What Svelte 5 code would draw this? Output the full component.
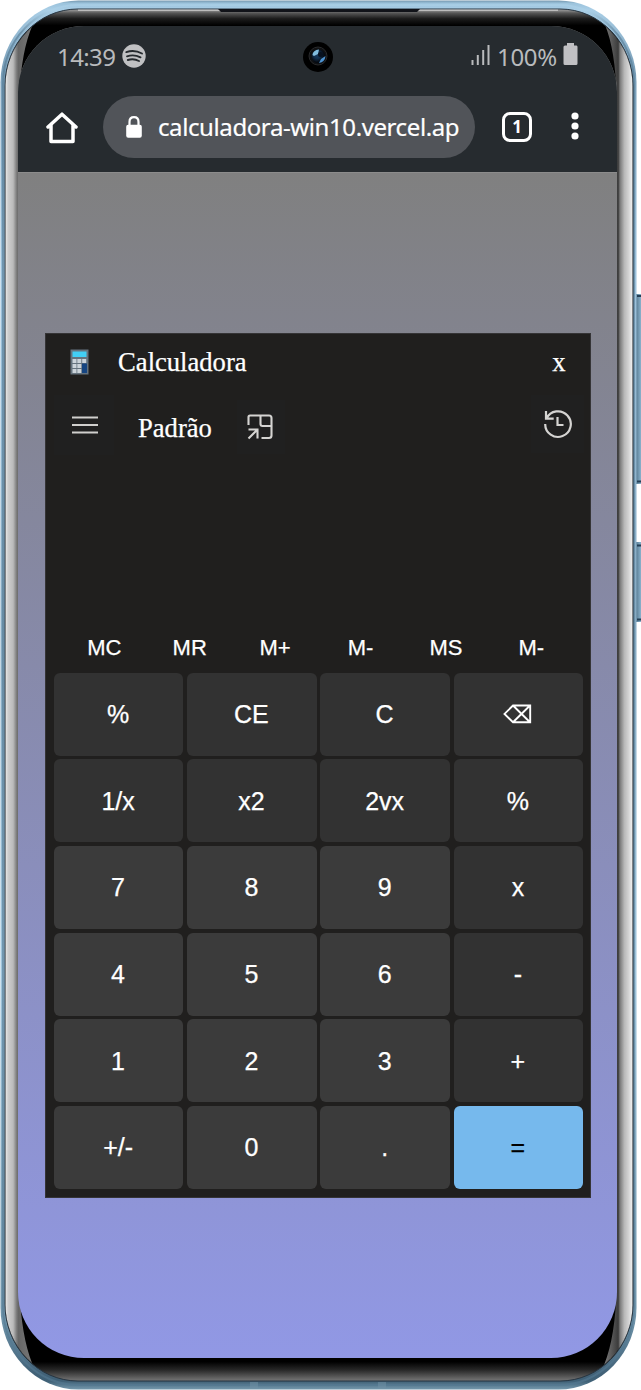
<script>
  const memory = ['MC', 'MR', 'M+', 'M-', 'MS', 'M-'];
  const keys = [
    '%', 'CE', 'C', '⌫',
    '1/x', 'x2', '2vx', '%',
    '7', '8', '9', 'x',
    '4', '5', '6', '-',
    '1', '2', '3', '+',
    '+/-', '0', '.', '='
  ];
  const isDigitArea = (i) => i >= 8 && i % 4 !== 3;
</script>

<div class="phone">
  <svg class="frame" width="641" height="1390" viewBox="0 0 641 1390" aria-hidden="true">
    <defs>
      <linearGradient id="body" x1="0" y1="0" x2="0" y2="1">
        <stop offset="0" stop-color="#7396ad" />
        <stop offset=".002" stop-color="#9cc3dc" />
        <stop offset=".0065" stop-color="#a9cee6" />
        <stop offset=".05" stop-color="#789db7" />
        <stop offset=".2" stop-color="#9dc2dc" />
        <stop offset=".45" stop-color="#86aac2" />
        <stop offset=".7" stop-color="#a0c5dc" />
        <stop offset=".95" stop-color="#6f94aa" />
        <stop offset=".988" stop-color="#426278" />
        <stop offset=".994" stop-color="#3f6076" />
        <stop offset="1" stop-color="#7599ad" />
      </linearGradient>
      <linearGradient id="glass" x1="0" y1="9" x2="0" y2="1381" gradientUnits="userSpaceOnUse">
        <stop offset="0" stop-color="#aaa" />
        <stop offset=".003" stop-color="#555" />
        <stop offset=".007" stop-color="#1c1c1c" />
        <stop offset=".012" stop-color="#000" />
        <stop offset=".986" stop-color="#000" />
        <stop offset=".992" stop-color="#282828" />
        <stop offset="1" stop-color="#777" />
      </linearGradient>
      <linearGradient id="left" x1="5" y1="0" x2="32" y2="0" gradientUnits="userSpaceOnUse">
        <stop offset="0" stop-color="#eee" />
        <stop offset=".12" stop-color="#cdcdcd" />
        <stop offset=".3" stop-color="#bbb" />
        <stop offset=".44" stop-color="#777" />
        <stop offset=".5" stop-color="#666" />
        <stop offset="1" stop-color="#777" />
      </linearGradient>
      <linearGradient id="right" x1="632" y1="0" x2="605" y2="0" gradientUnits="userSpaceOnUse">
        <stop offset="0" stop-color="#eee" />
        <stop offset=".12" stop-color="#d4d4d4" />
        <stop offset=".28" stop-color="#b8b8b8" />
        <stop offset=".45" stop-color="#777" />
        <stop offset=".51" stop-color="#3b3b3b" />
        <stop offset="1" stop-color="#777" />
      </linearGradient>
      <linearGradient id="button" x1="0" x2="1" y1="0" y2="0">
        <stop offset="0" stop-color="#587b91" />
        <stop offset=".6" stop-color="#88b0ca" />
        <stop offset="1" stop-color="#a5cbe2" />
      </linearGradient>
      <linearGradient id="rim" x1="0" x2="0" y1="0" y2="1">
        <stop offset="0" stop-color="#acd1e8" />
        <stop offset=".004" stop-color="#acd1e8" />
        <stop offset=".02" stop-color="#537891" />
        <stop offset="1" stop-color="#537891" />
      </linearGradient>
      <clipPath id="shape"><rect x="5.5" y="9.5" width="627" height="1371" rx="73" ry="76" /></clipPath>
      <radialGradient id="lens" cx=".4" cy=".4">
        <stop offset="0" stop-color="#173c60" />
        <stop offset=".5" stop-color="#112d4b" />
        <stop offset="1" stop-color="#060a11" />
      </radialGradient>
    </defs>
    <g fill="url(#button)">
      <rect x="636" y="294" width="8" height="190" />
      <rect x="636" y="542" width="8" height="80" />
    </g>
    <path d="M637 296h4M637 481.500h4M637 545.500h4M637 619.500h4" stroke="#243f55" stroke-width="2" />
    <rect x=".5" y=".5" width="636" height="1389" rx="78" ry="82" fill="url(#body)" />
    <rect x="3" y="5" width="631" height="1380" rx="75" ry="79" fill="none" stroke="url(#rim)" stroke-opacity=".6" stroke-width="2" />
    <rect x="5" y="9" width="628" height="1372" rx="73" ry="77" fill="url(#glass)" stroke="#263440" />
    <g clip-path="url(#shape)">
      <path d="M0 0 36 18Q23 42 20 85V1300Q23 1345 35 1370L0 1390Z" fill="url(#left)" />
      <path d="M641 0 602 18Q614 42 616 85V1300Q614 1345 601 1372L641 1390Z" fill="url(#right)" />
      <path d="M78 10H558" stroke="#ccc" stroke-width="1.500" />
    </g>
    <path d="M218 9h202l-3 3H221z" fill="#111319" />
    <path d="M254 1382v7M382 1382v7" stroke="#7192a6" stroke-width="8" opacity=".5" />
  </svg>

  <main class="screen">
    <header>
      <div class="status">
        <span class="time">14:39</span>
        <svg class="spotify" width="24" height="24" viewBox="0 0 24 24">
          <circle cx="12" cy="12" r="11.700" fill="#c0c1c3" />
          <path d="M4.300 8.100Q12.500 5.500 20 9.500M5 12.300Q12 10 18.500 13.300M5.800 16Q11.800 14.200 17 17" fill="none" stroke="#262b2f" stroke-width="1.900" stroke-linecap="round" />
        </svg>
        <svg class="camera" width="30" height="30" viewBox="0 0 30 30">
          <circle cx="15" cy="15" r="15" fill="#000" />
          <circle cx="15" cy="14" r="9" fill="#101113" stroke="#292a2c" />
          <circle cx="15.500" cy="14.500" r="7" fill="url(#lens)" />
          <path d="M9.500 13Q10 8 16 7.500L15 12 11 14Z" fill="#82bddf" />
          <path d="M16 21Q22 20 22.500 14L18 17Z" fill="#4d92d0" />
          <circle cx="17.500" cy="12.500" r="2.500" fill="#08111f" />
        </svg>
        <svg class="signal" width="19" height="22" viewBox="0 0 19 22">
          <path d="M1.500 16v5M6.800 11v10M12.200 6v15M17.500 1v20" stroke="#b9bbbd" stroke-width="2" />
        </svg>
        <span class="percent">100%</span>
        <svg class="battery" width="15" height="22" viewBox="0 0 15 22">
          <path d="M4 0h7v2.500h2.500Q14.500 2.500 14.500 4v16.500q0 1.500-1.500 1.500H2Q.5 22 .5 20.500V4q0-1.500 1.500-1.500h2z" fill="#c0c0c3" />
        </svg>
      </div>
      <div class="browser">
        <svg class="home" width="32" height="32" viewBox="0 0 32 32">
          <path d="M2 15 16 2.200 30 15M5 13V29.500H27V13" fill="none" stroke="#fff" stroke-width="3.500" stroke-linejoin="round" stroke-linecap="round" />
        </svg>
        <div class="address">
          <svg width="16" height="22" viewBox="0 0 16 22">
            <path d="M3.500 10V6Q3.500 1.200 8 1.200T12.500 6v4" fill="none" stroke="#fff" stroke-width="2.200" />
            <rect x=".2" y="8.800" width="15.600" height="13" rx="2" fill="#fff" />
          </svg>
          <span>calculadora-win10.vercel.ap</span>
        </div>
        <div class="tabs">1</div>
        <svg class="dots" width="8" height="28" viewBox="0 0 8 28" fill="#fff">
          <circle cx="4" cy="4" r="3.600" /><circle cx="4" cy="14" r="3.600" /><circle cx="4" cy="24" r="3.600" />
        </svg>
      </div>
    </header>

    <section class="calculator">
      <div class="title">
        <svg width="19" height="26" viewBox="0 0 19 26">
          <rect x=".5" y=".5" width="18" height="25" fill="#65737e" />
          <rect x="2.500" y="2.500" width="14" height="5.500" fill="#42cff5" />
          <path d="M2.500 10h4v4h-4zM7.300 10h4v4h-4zM12.200 10h4v4h-4zM2.500 15h4v4h-4zM7.300 15h4v4h-4zM2.500 20h4v4h-4zM7.300 20h4v4h-4z" fill="#cbd3da" />
          <path d="M12 14.500h5V24h-5z" fill="#164581" />
        </svg>
        <span>Calculadora</span>
        <span class="close">x</span>
      </div>
      <div class="mode">
        <button class="menu" aria-label="Menu">
          <svg width="28" height="20" viewBox="0 0 28 20"><path d="M1 2.500h26M1 10h26M1 17.500h26" stroke="#d0cfcd" stroke-width="1.900" /></svg>
        </button>
        <span>Padrão</span>
        <button class="pin" aria-label="Compact">
          <svg width="26" height="26" viewBox="0 0 26 26"><path d="M1.500 11V3Q1.500 1.500 3 1.500H22Q24.500 1.500 24.500 4V21.500Q24.500 24 22 24H14.500M13.500 2V10Q13.500 12 15.500 12H24M1.500 24.500 10.500 15.500M1.500 15.500H10.500V24.500" fill="none" stroke="#d5d4d2" stroke-width="2.100" /></svg>
        </button>
        <button class="history" aria-label="History">
          <svg width="30" height="30" viewBox="0 0 30 30"><path d="M3.500 9.500A12.800 12.800 0 1 1 2.200 15M3 2V9.700H10.700M14.500 8V16H20.500" fill="none" stroke="#d5d4d2" stroke-width="2.200" /></svg>
        </button>
      </div>
      <div class="display"></div>
      <div class="memory">
        {#each memory as label}<button>{label}</button>{/each}
      </div>
      <div class="keys">
        {#each keys as key, i}
          <button class:digit={isDigitArea(i)} class:equals={key === '='} aria-label={key}>
            {#if key === '⌫'}
              <svg width="29" height="20" viewBox="0 0 29 20"><path d="M10 1.500H27.200V18.300H10L1.500 9.900ZM10 1.500 27 18.300M27 1.500 10 18.300" fill="none" stroke="#fff" stroke-width="1.900" /></svg>
            {:else}{key}{/if}
          </button>
        {/each}
      </div>
    </section>
  </main>
</div>

<style>
  :global(body) { margin: 0; background: #fff; }
  * { box-sizing: border-box; }
  svg { display: block; flex: none; }
  button { border: 0; padding: 0; margin: 0; color: #fff; font: inherit; }
  .phone { position: relative; width: 641px; height: 1390px; overflow: hidden; padding: 26px 0 0 18px; }
  .frame { position: absolute; inset: 0; }
  .screen { position: relative; width: 599px; height: 1332px; border-radius: 66px; overflow: hidden; background: linear-gradient(#808080 11%, #9198e5); }
  header { height: 146px; background: #262b2f; box-shadow: 0 1px #8c8c8c; color: #fff; font-family: "Noto Sans", sans-serif; }
  .status { height: 62px; display: flex; align-items: center; padding-left: 39px; color: #b9bbbd; font-size: 24px; white-space: nowrap; }
  .time { width: 65px; margin-top: -2px; letter-spacing: -.6px; }
  .spotify { margin-top: -2px; }
  .camera { margin-left: 157px; }
  .signal { margin: -5px 0 0 138px; }
  .percent { width: 66px; margin: -2px 0 0 7px; letter-spacing: -.3px; }
  .battery { margin-top: -6px; }
  .browser { height: 84px; display: flex; align-items: flex-start; padding: 8px 0 0 28px; }
  .home { margin-top: 16px; }
  .address { width: 372px; height: 62px; margin-left: 25px; border-radius: 31px; background: #515459; display: flex; align-items: center; padding: 0 14px 0 23px; font-size: 24px; }
  .address span { margin: -1px 0 0 16px; white-space: nowrap; letter-spacing: -.4px; -webkit-text-stroke: .2px; }
  .tabs { width: 30px; height: 30px; margin: 16px 0 0 27px; border: 3px solid #fff; border-radius: 8px; font-size: 17px; line-height: 23px; font-weight: 700; text-align: center; }
  .dots { margin: 16px 0 0 39px; }
  .calculator { width: 546px; height: 865px; margin: 160.600px 0 0 26.600px; background: #201f1e; color: #fff; font-family: "Liberation Serif", serif; font-size: 26.600px; outline: 1px solid #55555b66; outline-offset: -1px; -webkit-text-stroke: .25px; }
  .title { height: 59px; display: flex; align-items: center; padding: 0 25px; }
  .title svg { margin-right: 29.500px; }
  .close { margin-left: auto; }
  .mode { height: 68px; display: flex; align-items: center; padding: 0 7px 0 9px; }
  .mode > span { margin-left: 24.400px; margin-top: 6px; }
  .mode button { display: grid; place-items: center; background: #202020; }
  .menu { width: 60px; height: 60px; padding-left: 3px; }
  .mode .menu { margin-top: -1px; }
  .mode .pin { width: 48px; height: 54px; margin-left: 25px; margin-top: 2px; padding-right: 2px; }
  .mode .history { width: 53px; height: 58px; margin-left: auto; margin-top: -4px; padding-left: 2px; }
  .display { height: 162px; }
  .memory { height: 51px; margin: 0 16.500px 0 17px; display: grid; grid-template-columns: repeat(6, 1fr); font: 22px "Liberation Sans", Arial, sans-serif; }
  .memory button { background: transparent; padding-top: 1px; }
  .keys { height: 516.500px; margin: 0 7.300px 0 9.100px; display: grid; grid-template: repeat(6, 1fr) / repeat(4, 1fr); gap: 3.500px; font: 25px "Liberation Sans", Arial, sans-serif; }
  .keys button { display: grid; place-items: center; padding: .5px 1px 0 0; border-radius: 6px; background: #323232; }
  .keys .digit { background: #3b3b3b; }
  .keys .equals { background: #76b9ed; color: #000; }
</style>
